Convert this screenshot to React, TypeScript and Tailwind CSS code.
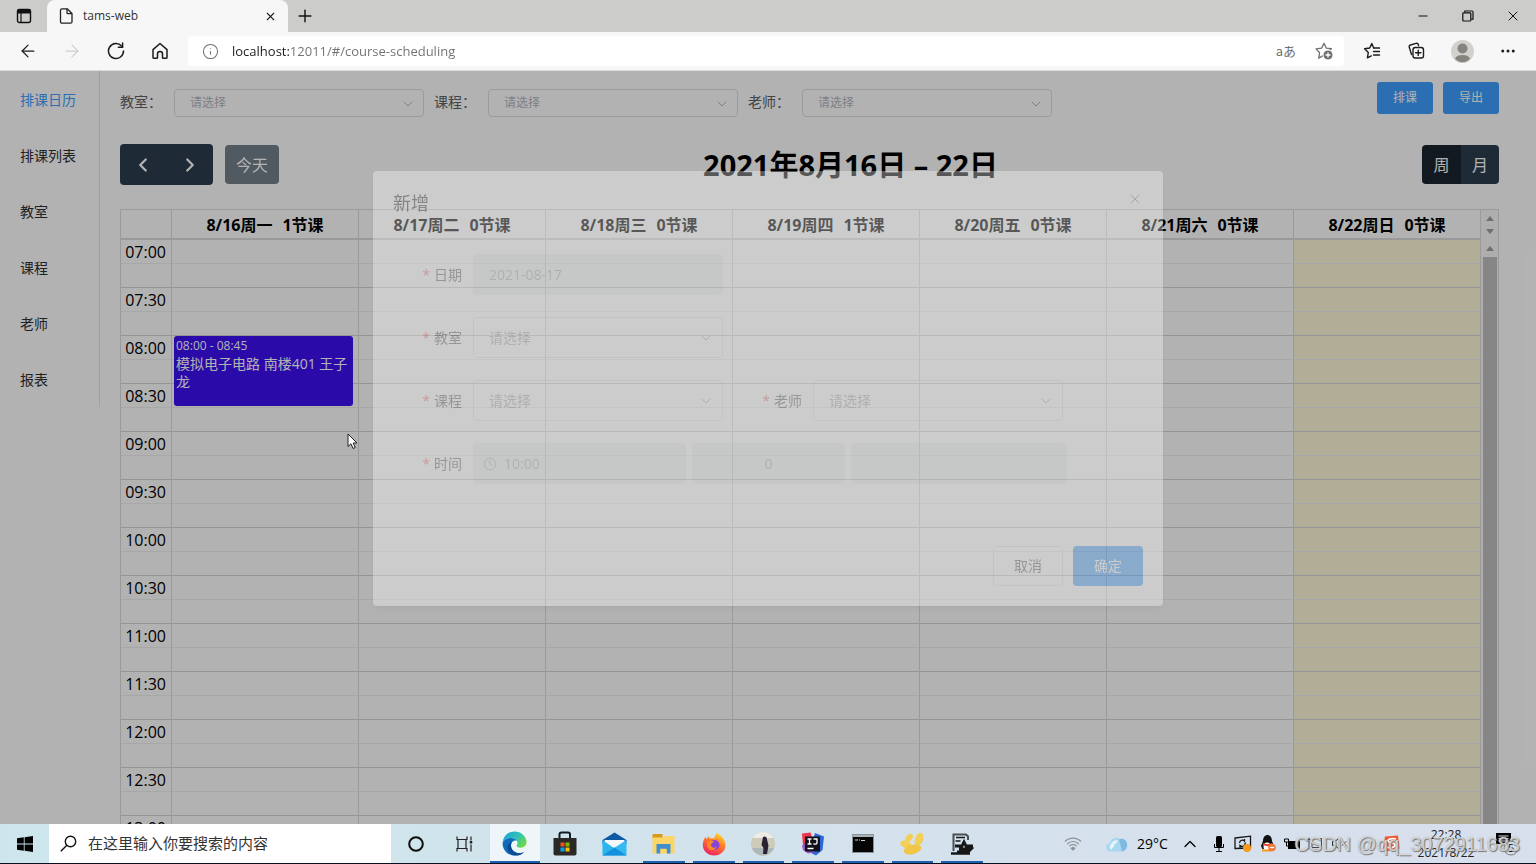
import React, { ReactNode } from "react"
import {
  ArrowLeft,
  ArrowRight,
  ChevronDown,
  ChevronLeft,
  ChevronRight,
  ChevronUp,
  Clock,
  Ellipsis,
  File,
  Info,
  Minus,
  Plus,
  X,
} from "lucide-react"

const MENU = ["排课日历", "排课列表", "教室", "课程", "老师", "报表"]

const FILTERS = [
  { id: "room", label: "教室：" },
  { id: "course", label: "课程：" },
  { id: "teacher", label: "老师：" },
]

const DAYS = [
  { date: "8/16周一", count: 1 },
  { date: "8/17周二", count: 0 },
  { date: "8/18周三", count: 0 },
  { date: "8/19周四", count: 1 },
  { date: "8/20周五", count: 0 },
  { date: "8/21周六", count: 0 },
  { date: "8/22周日", count: 0 },
]

const TIMES = [
  "07:00", "07:30", "08:00", "08:30", "09:00", "09:30", "10:00",
  "10:30", "11:00", "11:30", "12:00", "12:30", "13:00",
]

/* ---------- Browser ---------- */

function TabStrip() {
  return (
    <div className="flex h-8 items-center bg-[#cccccb]">
      <button aria-label="标签页操作" className="flex h-8 w-[47px] items-center justify-center">
        <svg width="16" height="16" viewBox="0 0 16 16" fill="none" stroke="#111">
          <rect x="1.5" y="1.5" width="13" height="13" rx="2" strokeWidth="1.4" />
          <path d="M1.5 3.5h13" strokeWidth="4" />
          <path d="M5 5v9.5" strokeWidth="1.2" />
        </svg>
      </button>
      <div className="flex h-8 w-[241px] items-center rounded-t-lg bg-[#f7f7f7] pl-3 pr-[7px]">
        <svg width="14" height="16" viewBox="0 0 14 16" fill="none" stroke="#222" strokeWidth="1.3" strokeLinejoin="round">
          <path d="M3 .8h5.200l4.800 4.700v8.200c0 .9-.6 1.500-1.500 1.500H3c-.9 0-1.500-.6-1.500-1.500V2.300C1.500 1.400 2.100.8 3 .8z" />
          <path d="M8 .8v4c0 .6.3.9.9.9H13" />
        </svg>
        <span className="ml-[10px] flex-1 text-xs text-[#333]">tams-web</span>
        <button aria-label="关闭标签页" className="p-1">
          <X size={13} strokeWidth={2} className="text-[#222]" />
        </button>
      </div>
      <button aria-label="新建标签页" className="ml-[7px]">
        <Plus size={20} strokeWidth={1.7} className="text-[#111]" />
      </button>
      <div className="ml-auto flex items-center text-[#111]">
        <button aria-label="最小化" className="flex w-[45px] justify-center">
          <Minus size={14} strokeWidth={1.7} />
        </button>
        <button aria-label="还原" className="flex w-[45px] justify-center">
          <svg width="12" height="12" viewBox="0 0 12 12" fill="none" stroke="#111" strokeWidth="1.2">
            <rect x=".8" y="2.800" width="8" height="8.200" rx=".8" />
            <path d="M2.800 2.500V1h7.200c.6 0 1 .4 1 1v7.200H9.300" />
          </svg>
        </button>
        <button aria-label="关闭" className="flex w-[46px] justify-center">
          <X size={16} strokeWidth={1.5} />
        </button>
      </div>
    </div>
  )
}

function AddressBar() {
  return (
    <div className="flex h-[39px] items-center border-b border-[#dcdcdc] bg-[#f7f7f7] text-[#1c1c1c]">
      <div className="flex w-[188px] shrink-0 items-center pl-[6px]">
        <button aria-label="后退" className="flex w-11 justify-center">
          <ArrowLeft size={20} strokeWidth={1.5} />
        </button>
        <button aria-label="前进" className="flex w-11 justify-center text-[#cfcfcf]">
          <ArrowRight size={20} strokeWidth={1.5} />
        </button>
        <button aria-label="刷新" className="flex w-11 justify-center">
          <svg width="18" height="18" viewBox="0 0 18 18" fill="none" stroke="currentColor" strokeWidth="1.5" strokeLinecap="round">
            <path d="M16.5 9A7.5 7.5 0 1 1 14.6 4" />
            <path d="M15.6 1v4.2h-4.2" />
          </svg>
        </button>
        <button aria-label="主页" className="flex w-11 justify-center">
          <svg width="18" height="18" viewBox="0 0 18 18" fill="none" stroke="currentColor" strokeWidth="1.5" strokeLinejoin="round">
            <path d="M2 7.6 9 1.5l7 6.1v7.6c0 .7-.4 1.1-1.1 1.1h-2.6c-.5 0-.8-.3-.8-.8v-3.6c0-1.5-.9-2.3-2.5-2.3s-2.500.8-2.500 2.300v3.600c0 .5-.3.8-.8.8H3.100c-.7 0-1.100-.4-1.100-1.100z" />
          </svg>
        </button>
      </div>
      <div className="flex h-[30px] flex-1 items-center rounded bg-white pl-[14px] pr-[10px] text-[#707070]">
        <Info size={17} strokeWidth={1.5} />
        <input
          aria-label="地址"
          defaultValue="localhost:12011/#/course-scheduling"
          className="ml-[13px] flex-1 bg-[linear-gradient(to_right,#1c1c1c_57px,#707070_57px)] bg-clip-text text-[13px] leading-5 text-transparent"
        />
        <button aria-label="翻译" className="mr-[18px] text-[13px] leading-4 font-['Noto_Sans_CJK_JP',sans-serif]">
          aあ
        </button>
        <button aria-label="添加到收藏夹">
          <svg width="20" height="20" viewBox="0 0 20 20" fill="none" stroke="currentColor" strokeWidth="1.3" strokeLinejoin="round">
            <path d="m10 2.300 2.200 4.800 5.200.6-3.800 3.600.9 5L9.500 14.400l-4.800 2.700.9-5.400L2 7.900l5.600-.8z" />
            <circle cx="14" cy="14" r="5" fill="#6e6e6e" stroke="white" strokeWidth="1" />
            <path d="M11.500 14h5M14 11.500v5" stroke="white" />
          </svg>
        </button>
      </div>
      <div className="flex w-[192px] shrink-0 items-center pl-[6px]">
        <button aria-label="收藏夹" className="flex w-11 justify-center">
          <svg width="18" height="18" viewBox="0 0 18 18" fill="none" stroke="currentColor" strokeWidth="1.4" strokeLinejoin="round" strokeLinecap="round">
            <path d="M10.800 6 8.800 1.600 6.700 6 1.600 6.800l3.700 3.700-.9 5.400 3.900-2" />
            <path d="M10.800 6h5.700M10.500 9.500h6M10.500 13h6" />
          </svg>
        </button>
        <button aria-label="集锦" className="flex w-11 justify-center">
          <svg width="18" height="18" viewBox="0 0 18 18" fill="none" stroke="currentColor" strokeWidth="1.400" strokeLinejoin="round" strokeLinecap="round">
            <path d="M4.500 12.500 2.300 5.300c-.3-1 .2-2 1.200-2.300L9 1.300c1-.3 2 .2 2.300 1.200l.3 1" />
            <rect x="6" y="5.500" width="10.500" height="10.500" rx="2.200" />
            <path d="M11.250 8.200v5.200M8.600 10.800h5.300" />
          </svg>
        </button>
        <button aria-label="个人资料" className="flex w-12 justify-center">
          <svg width="23" height="23" viewBox="0 0 23 23">
            <circle cx="11.500" cy="11.500" r="11.500" fill="#d2d1cd" />
            <circle cx="11.500" cy="8.500" r="5" fill="#85847f" />
            <path d="M4 18.500c1-2.600 4-3.600 7.500-3.600s6.500 1 7.500 3.600c-2 2.500-4.500 3.700-7.500 3.700s-5.500-1.200-7.500-3.700z" fill="#85847f" />
          </svg>
        </button>
        <button aria-label="设置及其他" className="flex w-11 justify-center">
          <Ellipsis size={18} strokeWidth={2} />
        </button>
      </div>
    </div>
  )
}

/* ---------- Page ---------- */

function Sidebar() {
  return (
    <nav className="w-[100px] shrink-0 self-start border-r border-[#e6e6e6]">
      {MENU.map((item, i) => (
        <a
          key={item}
          href="#/course-scheduling"
          className={`flex h-14 items-center pl-5 pt-px text-sm ${i === 0 ? "text-[#409eff]" : "text-[#303133]"}`}
        >
          {item}
        </a>
      ))}
    </nav>
  )
}

function Filters() {
  return (
    <div className="flex h-[73px] items-start justify-between">
      <form className="flex gap-[10px] pt-[18px]">
        {FILTERS.map(({ id, label }) => (
          <div key={id} className="flex items-center">
            <label htmlFor={id} className="w-[54px] whitespace-nowrap pb-[2px] text-sm text-[#606266]">
              {label}
            </label>
            <div className="relative">
              <select
                id={id}
                className="h-7 w-[250px] appearance-none rounded border border-[#dcdfe6] bg-white pl-[15px] text-xs text-[#b4b8c0]"
              >
                <option>请选择</option>
              </select>
              <ChevronDown size={16} strokeWidth={1.5} className="pointer-events-none absolute right-2 top-[7px] text-[#b4b8c0]" />
            </div>
          </div>
        ))}
      </form>
      <div className="flex gap-[10px] pt-[11px]">
        <button className="h-8 w-14 rounded-[3px] bg-[#409eff] text-xs text-white">排课</button>
        <button className="h-8 w-14 rounded-[3px] bg-[#409eff] text-xs text-white">导出</button>
      </div>
    </div>
  )
}

function CalendarToolbar() {
  return (
    <div className="mb-6 flex h-[41px] items-center justify-between text-white">
      <div className="flex items-center gap-3">
        <div className="flex h-[41px] w-[93px] items-center rounded bg-[#2c3e50]">
          <button aria-label="上一周" className="flex flex-1 justify-center">
            <ChevronLeft size={22} strokeWidth={2.5} />
          </button>
          <button aria-label="下一周" className="flex flex-1 justify-center">
            <ChevronRight size={22} strokeWidth={2.5} />
          </button>
        </div>
        <button className="h-[39px] w-[54px] rounded bg-[#2c3e50] text-base opacity-65">今天</button>
      </div>
      <h2 className="text-[29px] leading-9 font-bold text-black">2021年8月16日 – 22日</h2>
      <div className="flex h-[39px] overflow-hidden rounded text-base">
        <button className="w-[39px] bg-[#1a252f]">周</button>
        <button className="w-[38px] bg-[#2c3e50]">月</button>
      </div>
    </div>
  )
}

function CourseEvent() {
  return (
    <a
      href="#/course-scheduling"
      className="absolute left-[2px] right-[5px] top-0 z-10 h-[70px] rounded-[3px] bg-[#3d0ff2] p-[2px] pt-[1px] text-white"
    >
      <div className="text-[12px] leading-[18px]">08:00 - 08:45</div>
      <div className="text-sm leading-[18px]">模拟电子电路 南楼401 王子龙</div>
    </a>
  )
}

function Slot({ time, minor }: { time: string; minor?: boolean }) {
  // the full half-hour line closes the second row of each pair
  const line = minor ? "border-b border-b-[#d6d6d6]" : "border-b border-b-[#efefef]"
  return (
    <tr>
      <td className={`h-6 border-x border-x-[#ddd] p-0 pt-[2px] pr-[5px] text-right text-base leading-[21px] text-black ${line}`}>
        {minor ? null : time}
      </td>
      {DAYS.map(({ date }, i) => (
        <td
          key={date}
          className={`relative h-6 border-r border-r-[#ddd] p-0 ${line} ${i === 6 ? "bg-[#fff8d9]" : ""}`}
        >
          {i === 0 && time === "08:00" && !minor ? <CourseEvent /> : null}
        </td>
      ))}
    </tr>
  )
}

function Arrow({ down }: { down?: boolean }) {
  return (
    <svg width="8" height="5" viewBox="0 0 8 5" fill="#a0a0a0" className={down ? "rotate-180" : ""}>
      <path d="M4 0l4 5H0z" />
    </svg>
  )
}

function Calendar() {
  return (
    <div className="flex min-h-0 flex-1 overflow-hidden">
      <table className="flex-1 table-fixed border-separate border-spacing-0 self-start">
        <colgroup>
          <col className="w-[52px]" />
          {DAYS.map(({ date }) => (
            <col key={date} />
          ))}
        </colgroup>
        <thead>
          <tr>
            <th className="h-[31px] border border-b-2 border-[#ddd] p-0" />
            {DAYS.map(({ date, count }) => (
              <th
                key={date}
                className="h-[31px] border-t border-b-2 border-r border-[#ddd] p-0 pt-[2px] text-base leading-6 font-bold text-black"
              >
                {date}
                <span className="ml-[10px]">{count}节课</span>
              </th>
            ))}
          </tr>
        </thead>
        <tbody>
          {TIMES.map((time) => (
            <React.Fragment key={time}>
              <Slot time={time} minor={false} />
              <Slot time={time} minor />
            </React.Fragment>
          ))}
        </tbody>
      </table>
      <div className="flex w-[18px] shrink-0 flex-col items-center border-r border-t border-[#ddd] bg-[#fafafa]">
        <div className="flex h-[30px] flex-col items-center justify-between py-[6px]">
          <Arrow />
          <Arrow down />
        </div>
        <div className="flex h-[17px] items-center">
          <Arrow />
        </div>
        <div className="w-[14px] flex-1 bg-[#c1c1c1]" />
      </div>
    </div>
  )
}

/* ---------- Dialog ---------- */

function FormRow({ id, label, children }: { id: string; label: string; children: ReactNode }) {
  return (
    <div className="flex items-center">
      <label htmlFor={id} className="w-20 pr-[11px] text-right text-sm text-[#606266]">
        <span className="mr-1 text-[#f56c6c]">*</span>
        {label}
      </label>
      {children}
    </div>
  )
}

function DialogSelect({ id }: { id: string }) {
  return (
    <div className="relative">
      <select
        id={id}
        className="h-[41px] w-[250px] appearance-none rounded border border-[#e4e6ea] bg-transparent pl-[15px] text-sm text-[#a8abb2]"
      >
        <option>请选择</option>
      </select>
      <ChevronDown size={16} strokeWidth={1.5} className="pointer-events-none absolute right-[9px] top-[13px] text-[#a8abb2]" />
    </div>
  )
}

function CreateDialog() {
  return (
    <div role="dialog" aria-label="新增" className="w-[790px] rounded-sm bg-white opacity-34 shadow-md">
      <div className="flex items-start justify-between px-5 pt-5">
        <h3 className="text-lg leading-6 text-[#303133]">新增</h3>
        <button aria-label="关闭对话框">
          <X size={16} strokeWidth={1.5} className="text-[#909399]" />
        </button>
      </div>
      <form className="flex flex-col gap-[22px] px-5 pt-[39px]">
        <FormRow id="date" label="日期">
          <input
            id="date"
            disabled
            defaultValue="2021-08-17"
            className="h-[41px] w-[250px] rounded bg-[#eff3f2] pl-4 text-sm text-[#a8abb2]"
          />
        </FormRow>
        <FormRow id="dialog-room" label="教室">
          <DialogSelect id="dialog-room" />
        </FormRow>
        <div className="flex gap-[10px]">
          <FormRow id="dialog-course" label="课程">
            <DialogSelect id="dialog-course" />
          </FormRow>
          <FormRow id="dialog-teacher" label="老师">
            <DialogSelect id="dialog-teacher" />
          </FormRow>
        </div>
        <FormRow id="start" label="时间">
          <div className="flex gap-[6px]">
            <div className="relative">
              <Clock size={14} strokeWidth={1.5} className="absolute left-[10px] top-[14px] text-[#a8abb2]" />
              <input
                id="start"
                disabled
                defaultValue="10:00"
                className="h-[41px] w-[213px] rounded bg-[#eff3f2] pl-[31px] text-sm text-[#a8abb2]"
              />
            </div>
            <input
              aria-label="时长"
              disabled
              defaultValue="0"
              className="h-[41px] w-[153px] rounded bg-[#eff3f2] text-center text-sm text-[#a8abb2]"
            />
            <input
              aria-label="结束时间"
              disabled
              className="h-[41px] w-[216px] rounded bg-[#eff3f2]"
            />
          </div>
        </FormRow>
      </form>
      <div className="flex justify-end gap-[10px] px-5 pb-5 pt-[62px]">
        <button className="h-10 w-[70px] rounded border border-[#e4e6ea] text-sm text-[#606266]">取消</button>
        <button className="h-10 w-[70px] rounded bg-[#409eff] text-sm text-white">确定</button>
      </div>
    </div>
  )
}

function Cursor() {
  return (
    <svg width="12" height="17" viewBox="0 0 12 17" className="absolute left-[347px] top-[362px] z-30">
      <path d="M1 1v12.500l3-2.700 2 4.700 2.200-1-2-4.500H10z" fill="white" stroke="#222" strokeWidth="1" />
    </svg>
  )
}

/* ---------- Taskbar ---------- */

function EdgeIcon() {
  return (
    <svg width="25" height="25" viewBox="0 0 25 25">
      <defs>
        <linearGradient id="edgeTop" x1="0" y1="0" x2="1" y2="0.600">
          <stop offset="0" stopColor="#1b9fd8" />
          <stop offset="0.600" stopColor="#2fc3b8" />
          <stop offset="1" stopColor="#6ad84a" />
        </linearGradient>
      </defs>
      <path d="M.7 11C1.500 4.800 6.500.5 12.500.5 19 .5 24.500 5.500 24.500 11c0 3.600-2.700 5.700-6 5.700-2.700 0-4.300-1-3.900-2.200.3-.7.9-1.100.9-2.500 0-2.800-2.900-5-6.500-5-3.600 0-7 1.700-8.300 4z" fill="url(#edgeTop)" />
      <path d="M.6 11.500C2 8.500 5.500 7 9 7c2.600 0 4.700 1.100 5.800 2.600-2.800-.6-5.800 1.400-5.800 4.900 0 4.600 4.500 8 9.500 7.500 1.200-.1 2.400-.5 3.500-1-2.200 2.400-5.500 3.600-9.500 3.600C6 24.600.2 19 .6 11.500z" fill="#0f6cbd" />
      <path d="M9 13.500c-.6 5.500 4.500 9.500 9.500 8.700 1.300-.2 2.700-.7 3.700-1.500-1.900 3-5.500 4-8.700 3.900C8.500 24 5 20.500 5.500 16.500 5.800 14 7 12 9.500 11z" fill="#0c4a94" />
    </svg>
  )
}

function StoreIcon() {
  return (
    <svg width="24" height="25" viewBox="0 0 24 25">
      <path d="M6.500 8V3.500c0-1.500.6-2 2-2h6.500c1.400 0 2 .5 2 2V8" fill="none" stroke="#151a22" strokeWidth="2" />
      <path d="M.5 7h23v15.500c0 1.300-.7 2-2 2h-19c-1.300 0-2-.7-2-2z" fill="#2b2926" />
      <path fill="#f25022" d="M7.500 11.500h4v4h-4z" />
      <path fill="#7fba00" d="M12.500 11.500h4v4h-4z" />
      <path fill="#00a4ef" d="M7.500 16.500h4v4h-4z" />
      <path fill="#ffb900" d="M12.500 16.500h4v4h-4z" />
    </svg>
  )
}

function MailIcon() {
  return (
    <svg width="25" height="24" viewBox="0 0 25 24">
      <path d="M.5 8 12.500.5l12 7.500v4H.5z" fill="#0d5ba5" />
      <path d="M2.500 8h20v7h-20z" fill="#f4f8fb" />
      <path d="M.5 8 12.500 16.500.5 23.500z" fill="#2bb4ee" />
      <path d="M24.500 8v15.500H.5z" fill="#35b9f1" />
      <path d="M24.500 23.500H.5L12.500 15.500z" fill="#1590dc" />
    </svg>
  )
}

function FolderIcon() {
  return (
    <svg width="23" height="22" viewBox="0 0 23 22">
      <path d="M.5 1h10v5H.5z" fill="#d99a1a" />
      <path d="M.5 4.500h10L12.500 3h10v17.500H.5z" fill="#fbd667" />
      <path d="M4.500 20.500v-9.500h14v9.500h-3.700v-4.800H8.200v4.800z" fill="#3f8fcf" />
    </svg>
  )
}

function FirefoxIcon() {
  return (
    <svg width="24" height="24" viewBox="0 0 24 24">
      <defs>
        <linearGradient id="fox" x1="0.800" y1="0" x2="0.300" y2="1">
          <stop offset="0" stopColor="#ffe226" />
          <stop offset="0.450" stopColor="#ff7a2b" />
          <stop offset="1" stopColor="#ee2266" />
        </linearGradient>
      </defs>
      <path d="M15.500.5c1 2.500 4.500 3.500 6 6.500.6 1 2 3.500 2 6 0 6-5 10.500-11.300 10.500S.8 19 .8 13c0-3.500 1.200-6 2.700-8l1 2 2.500-3 .5 2.500c1.500-.5 3-.5 4.500 0C13 4.500 13.500 2 15.500.500z" fill="url(#fox)" />
      <circle cx="12.500" cy="13" r="5" fill="#8647d8" />
      <path d="M5.500 10c2-1.500 4-1.500 6.500-.5-1 1.800-3 1.300-3 3.500s3 3.500 5.500 2c-1 3-4.500 4-7 2.500s-3-4.500-2-7.500z" fill="#ff8a24" />
    </svg>
  )
}

function AvatarIcon() {
  return (
    <svg width="24" height="24" viewBox="0 0 24 24">
      <circle cx="12" cy="12" r="12" fill="#cfcbbb" />
      <path d="M1.600 6a12 12 0 0 1 20.800 0z" fill="#eeece4" />
      <path d="M1 16h22a12 12 0 0 1-22 0z" fill="#aeb8b8" />
      <path d="M12 5c2-1.500 4 0 4 2.500l1.500 6L16 22h-4l.5-6-2-3z" fill="#2b2135" />
    </svg>
  )
}

function IdeaIcon() {
  return (
    <svg width="24" height="24" viewBox="0 0 24 24">
      <path d="M1 1.500 9.500.500 13 12 2 13z" fill="#f0324e" />
      <path d="M14 1l9 3.500L21.500 18 15 23.500 8 20z" fill="#3067d8" />
      <path d="M1 13.500 8 9l6 11-7 1.500-5-3.500z" fill="#9557c8" />
      <path d="M4 4.500h15v15H4z" fill="#10101a" />
      <path d="M6.500 7h4M8.500 7v5M6.500 12h4M12.500 7H16v4c0 1.500-2.500 1.500-3.500.5M6.500 16.500h6" fill="none" stroke="white" strokeWidth="1.300" />
    </svg>
  )
}

function TerminalIcon() {
  return (
    <svg width="22" height="19" viewBox="0 0 22 19">
      <path d="M.5.500h21v18H.5z" fill="#050505" stroke="#8b9296" />
      <path d="M1 1h20v2H1z" fill="#a9b2b5" />
      <path d="M3 6h3M7 6h1M9 6.500h4" stroke="#d0d0d0" />
    </svg>
  )
}

function BirdIcon() {
  return (
    <svg width="24" height="22" viewBox="0 0 24 22" fill="#f4cf55">
      <ellipse cx="9" cy="5" rx="3" ry="5" transform="rotate(40 9 5)" />
      <ellipse cx="19" cy="6.500" rx="4" ry="7" transform="rotate(20 19 6.500)" />
      <ellipse cx="6" cy="11.500" rx="6" ry="3.500" transform="rotate(20 6 11.500)" />
      <ellipse cx="12.500" cy="16.500" rx="9" ry="4.700" transform="rotate(-15 12.500 16.500)" fill="#efc648" />
    </svg>
  )
}

function RecorderIcon() {
  return (
    <svg width="24" height="24" viewBox="0 0 24 24" fill="none" stroke="#161616">
      <path d="M3.500 19V2.500h12.500l2 2V8" strokeWidth="2" stroke="#4a4f52" />
      <path d="M6 5.500h9M5.500 9h5" strokeWidth="1.500" />
      <path d="M5 14h7l2-4 2 4h7M9 17h12l-3 3H7" strokeWidth="2.800" />
      <path d="M1 21.500h19" strokeWidth="2.500" />
    </svg>
  )
}

const APPS = [
  { name: "Microsoft Edge", icon: <EdgeIcon />, state: "active" },
  { name: "Microsoft Store", icon: <StoreIcon />, state: "idle" },
  { name: "邮件", icon: <MailIcon />, state: "idle" },
  { name: "文件资源管理器", icon: <FolderIcon />, state: "open" },
  { name: "Firefox", icon: <FirefoxIcon />, state: "open" },
  { name: "图片", icon: <AvatarIcon />, state: "open" },
  { name: "IntelliJ IDEA", icon: <IdeaIcon />, state: "open" },
  { name: "命令提示符", icon: <TerminalIcon />, state: "open" },
  { name: "Navicat", icon: <BirdIcon />, state: "open" },
  { name: "录屏", icon: <RecorderIcon />, state: "open" },
]

function Tray() {
  return (
    <div className="relative ml-auto flex h-full items-center text-black">
      <svg width="18" height="15" viewBox="0 0 18 15" fill="none" stroke="#8b9094" strokeWidth="1.200" className="mr-6">
        <path d="M1 5.500a11 11 0 0 1 16 0M3.200 8a8 8 0 0 1 11.600 0M5.300 10.200a5 5 0 0 1 7.400 0" />
        <path d="M7.300 12.300 9 14l1.700-1.700a2.500 2.500 0 0 0-3.400 0z" fill="#8b9094" />
      </svg>
      <svg width="22" height="16" viewBox="0 0 22 16" className="mr-[9px]">
        <path d="M4.500 15.500a4 4 0 0 1-.5-8 6 6 0 0 1 11-3 5.500 5.500 0 0 1 2 11z" fill="#a9d6f0" />
        <path d="M13 3.500a5.500 5.500 0 0 1 8 5.500c0 3-2 5.500-5 6.300z" fill="#7fb8e0" />
        <path d="M5 13.500a3 3 0 0 1 0-5c1-3 4-5 7-4-1 3-4 3-4 6z" fill="#e4f5fc" />
      </svg>
      <span className="w-[43px] text-sm">29°C</span>
      <ChevronUp size={20} strokeWidth={1.5} className="mr-[14px]" />
      <svg width="10" height="16" viewBox="0 0 10 16" className="mr-[10px]">
        <rect x="2" y="0" width="6" height="11" rx="1.500" />
        <path d="M.5 8v3.500h9V8M5 12v3.500M2 15.500h6" fill="none" stroke="black" />
      </svg>
      <svg width="18" height="17" viewBox="0 0 18 17" fill="none" stroke="#161616" strokeWidth="1.300" className="mr-2">
        <path d="M1 3 16.500 1.200V13L1 13.500zM5.500 8a3 3 0 0 1 5-2V4M11 7.500a3 3 0 0 1-5 3v2" />
        <circle cx="13" cy="13" r="4" fill="#f59a1b" stroke="none" />
      </svg>
      <svg width="16" height="17" viewBox="0 0 16 17" className="mr-2">
        <path d="M3 6c0-8 9-8 9 0l1.500 4-1 4H2.500L1 11z" fill="#111" />
        <ellipse cx="7" cy="11.500" rx="3.500" ry="4" fill="white" />
        <path d="M3 8c3 1.500 6 1.500 9 0l.3 2c-3 1.500-6 1.500-9.500 0z" fill="#e8402a" />
        <path d="M2 15.500h9" stroke="#f59a1b" strokeWidth="2" />
        <circle cx="12" cy="12.500" r="3.800" fill="#f07a3c" />
        <path d="M9.800 12.500h4.400" stroke="white" strokeWidth="1.300" />
      </svg>
      <svg width="17" height="12" viewBox="0 0 17 12" className="mr-[6px]">
        <path d="M4 3h12v8H4z" />
        <path d="M.5 1h4v3h-4zM2.500 4v4H4" fill="none" stroke="black" />
      </svg>
      <svg width="15" height="13" viewBox="0 0 15 13" fill="none" stroke="#444" className="mr-[10px]">
        <path d="M2 .5v12M.5 2.500h3M5 1.500h9.500v9H5zM7.500 12.500h5" />
      </svg>
      <svg width="15" height="13" viewBox="0 0 15 13" fill="none" stroke="#222" className="mr-[35px]">
        <path d="M.5 4.500h2.500l4-3.500v11L3 8.500H.5zM10 4.500l4 4M14 4.500l-4 4" />
      </svg>
      <svg width="18" height="17" viewBox="0 0 18 17" className="mr-[14px]">
        <path d="M3 1.500 16 .5l1.500 13L4 16.500 .8 14z" fill="#ee5a35" />
        <path d="M14 4c-4-1-8 0-8 2s7 1.500 7 4-5 3.500-9 2" fill="none" stroke="white" strokeWidth="1.800" />
      </svg>
      <div className="flex w-16 flex-col items-center text-xs leading-[18px] text-[#222]">
        <span>22:28</span>
        <span>2021/8/22</span>
      </div>
      <button aria-label="通知" className="relative ml-[17px] mr-4 text-[11px] leading-4">
        <svg width="25" height="25" viewBox="0 0 25 25">
          <path d="M1 2h15v11h-4v3l-3-3H1z" />
          <path d="M3.500 5h10M3.500 7.500h10M3.500 10h10" stroke="#d6deea" />
          <circle cx="16" cy="17" r="7" fill="#d6deea" stroke="#777" />
        </svg>
        <span className="absolute left-[13px] top-[9px]">5</span>
      </button>
      <p className="absolute right-4 top-2 whitespace-nowrap font-['Liberation_Sans',sans-serif] text-xl leading-6 text-white/60 [text-shadow:1px_1px_1px_#777,0_0_1px_#999]">
        CSDN @qq_3072911683
      </p>
    </div>
  )
}

function Taskbar() {
  return (
    <footer className="flex h-10 shrink-0 items-center border-b border-[#0a1020] bg-linear-to-r from-[#cde6ec] to-[#d8dfec]">
      <button aria-label="开始" className="flex w-[49px] shrink-0 justify-center">
        <svg width="16" height="16" viewBox="0 0 16 16">
          <path d="M0 2.300 6.800 1.300V7.600H0zM7.600 1.200 16 0v7.600H7.600zM0 8.400h6.800v6.300L0 13.700zM7.600 8.400H16V16l-8.400-1.200z" />
        </svg>
      </button>
      <div className="flex h-full w-[342px] shrink-0 items-center bg-white pl-[11px]">
        <svg width="17" height="17" viewBox="0 0 17 17" fill="none" stroke="#111" strokeWidth="1.400">
          <circle cx="10.500" cy="6.500" r="5.200" />
          <path d="M6.800 10.300.8 16.300" />
        </svg>
        <input
          aria-label="搜索"
          placeholder="在这里输入你要搜索的内容"
          className="ml-[11px] flex-1 text-[15px] placeholder:text-[#333]"
        />
      </div>
      <button aria-label="Cortana" className="flex w-[50px] shrink-0 justify-center">
        <svg width="16" height="16" viewBox="0 0 16 16" fill="none" stroke="#0c0c0c" strokeWidth="2">
          <circle cx="8" cy="8" r="6.800" />
        </svg>
      </button>
      <button aria-label="任务视图" className="flex w-[49px] shrink-0 justify-center pr-[2px]">
        <svg width="17" height="16" viewBox="0 0 17 16" fill="none" stroke="#222" strokeWidth="1.200">
          <path d="M1 .5v3h10v-3M1 15.500v-3h10v3M2 3.500v9M10 3.500v9M15 .5v4M15 8.500v7" />
          <path d="M15 5v2.500" strokeWidth="2.500" />
        </svg>
      </button>
      <div className="flex h-full w-[497px] shrink-0">
        {APPS.map(({ name, icon, state }) => (
          <button
            key={name}
            aria-label={name}
            className={`relative flex flex-1 items-center justify-center ${state === "active" ? "bg-[#eef6f9]" : ""}`}
          >
            {icon}
            {state !== "idle" ? (
              <span className={`absolute bottom-0 h-[2px] bg-[#1d5fae] ${state === "active" ? "inset-x-0" : "inset-x-1"}`} />
            ) : null}
          </button>
        ))}
      </div>
      <Tray />
    </footer>
  )
}

export default function App() {
  return (
    <div className="flex h-screen flex-col overflow-hidden font-['Open_Sans','Noto_Sans_CJK_SC',sans-serif]">
      <header className="shrink-0">
        <TabStrip />
        <AddressBar />
      </header>
      <div className="relative flex min-h-0 flex-1 overflow-hidden bg-white">
        <Sidebar />
        <main className="flex min-w-0 flex-1 flex-col pl-5 pr-[37px]">
          <Filters />
          <CalendarToolbar />
          <Calendar />
        </main>
        <div className="absolute inset-0 z-20 flex items-start justify-center bg-black/30 pt-[100px]">
          <CreateDialog />
        </div>
        <Cursor />
      </div>
      <Taskbar />
    </div>
  )
}
